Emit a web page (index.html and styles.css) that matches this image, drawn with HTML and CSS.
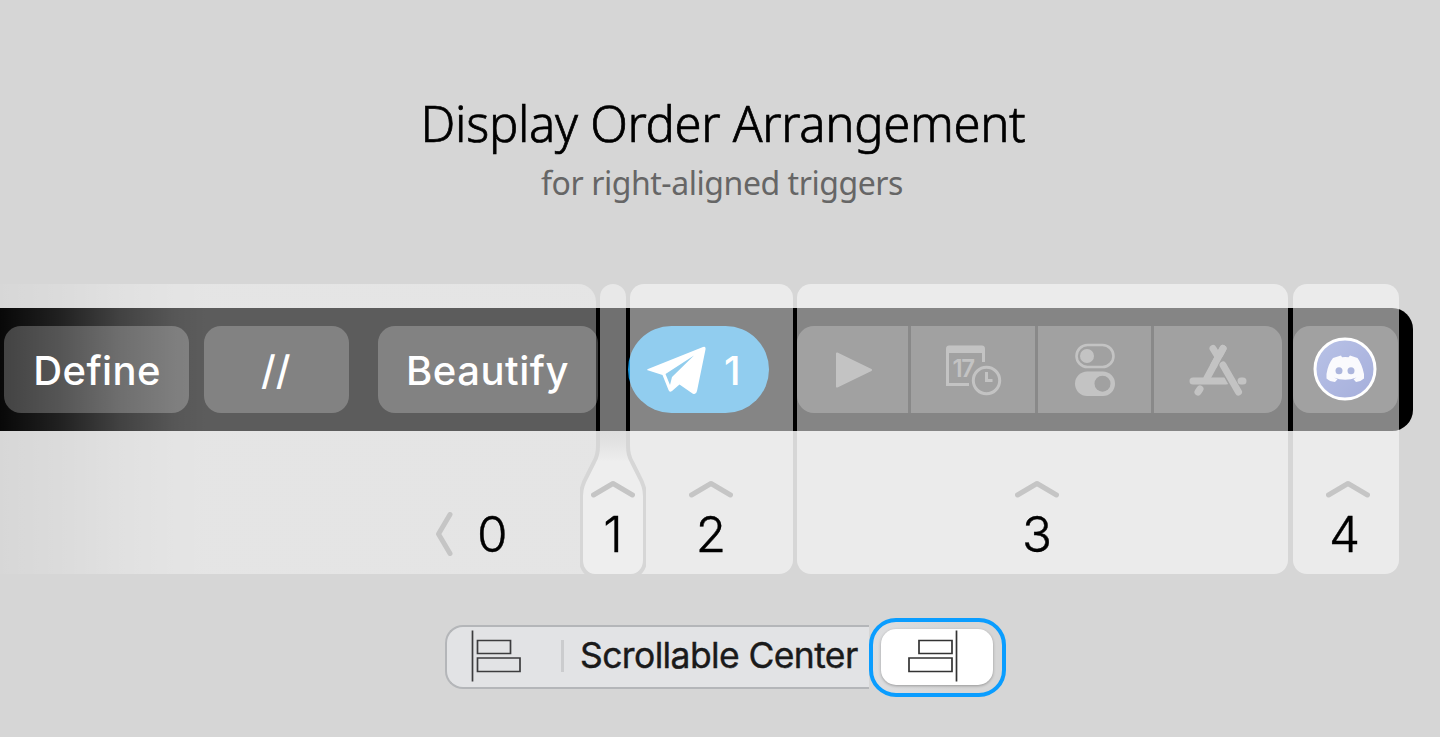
FILE: index.html
```html
<!DOCTYPE html>
<html lang="en">
<head>
<meta charset="utf-8">
<title>Display Order Arrangement</title>
<link rel="stylesheet" href="styles.css">
</head>
<body>
<header class="heading">
  <h1 class="title">Display Order Arrangement</h1>
  <p class="subtitle">for right-aligned triggers</p>
</header>

<main class="stage">
  <div class="touchbar">
    <div class="key key-define"></div>
    <div class="key key-slashes"></div>
    <div class="key key-beautify"></div>
    <div class="key-telegram"></div>
    <div class="group">
      <div class="cell cell-play">
        <svg width="38" height="38" viewBox="0 0 38 38"><path d="M2 2.5 36 19 2 35.5Z" fill="#838383" stroke="#838383" stroke-width="2" stroke-linejoin="round"/></svg>
      </div>
      <div class="cell cell-calendar">
        <svg width="58" height="52" viewBox="0 0 58 52" fill="none" stroke="#838383" stroke-width="3">
          <path d="M25 40.500H3.500V6M39.500 6V18"/>
          <path d="M2 9V5Q2 1.500 5 1.500H38Q41 1.500 41 5V9Z" fill="#838383" stroke="none"/>
          <circle cx="42.500" cy="36.500" r="13.200"/>
          <path d="M42.500 28V36.500H48.500"/>
          <text x="8.500" y="32.500" class="calendar-day">17</text>
        </svg>
      </div>
      <div class="cell cell-toggles">
        <svg width="42" height="54" viewBox="0 0 42 54">
          <rect x="2.500" y="2" width="37" height="22" rx="11" fill="none" stroke="#838383" stroke-width="2.600"/>
          <circle cx="13" cy="13" r="7" fill="#838383"/>
          <rect x="1" y="28.500" width="40" height="24.500" rx="12.250" fill="#838383"/>
          <circle cx="28.500" cy="40.700" r="8" fill="#3b3b3b"/>
        </svg>
      </div>
      <div class="cell cell-store">
        <svg width="58" height="52" viewBox="0 0 58 52" fill="none" stroke="#838383" stroke-width="7" stroke-linecap="round">
          <path d="M34 4.500 18 34" />
          <path d="M24 4.500 28 11"/>
          <path d="M4 37H37M52 37H54"/>
          <path d="M11 45 9 48"/>
          <path d="M30 15 46 43" stroke="#3b3b3b" stroke-width="9" stroke-linecap="butt"/>
          <path d="M34 4.500 25 21"/>
          <path d="M34 21 49.500 48"/>
        </svg>
      </div>
    </div>
    <div class="key key-discord">
      <svg width="64" height="64" viewBox="0 0 64 64">
        <defs><linearGradient id="blurple" x1="0" y1="0" x2="1" y2="1"><stop offset="0" stop-color="#6b80cc"/><stop offset="1" stop-color="#4557b4"/></linearGradient></defs>
        <circle cx="32" cy="32" r="30" fill="url(#blurple)" stroke="#fff" stroke-width="3"/>
        <path d="M20 21 28 18.500 29 20.300Q32 19.800 35.500 20.300L37 18.500 44.500 21Q49 27 51 37V41.500Q48 44.500 43 45L40.500 42.200 43.500 40.500Q32 45 21 40.500L24.500 42.200 22 45Q16.500 44.500 13.500 41.500V37Q15 27 20 21Z" fill="#f4f4fb"/>
        <circle cx="26" cy="33.800" r="3.500" fill="#5468b8"/><circle cx="38" cy="33.800" r="3.500" fill="#5468b8"/>
      </svg>
    </div>
  </div>

  <div class="panels">
    <section class="panel panel-0">
      <div class="labels">
        <span class="label label-define">Define</span>
        <span class="label label-slashes">//</span>
        <span class="label label-beautify">Beautify</span>
      </div>
      <div class="order order-row">
        <svg width="18" height="44" viewBox="0 0 18 44" class="chevron"><path d="M15 2.500 3.500 22 15 41.500"/></svg>
        <span class="number">0</span>
      </div>
    </section>
    <section class="panel panel-1">
      <svg class="bottle" width="66" height="290" viewBox="0 0 66 290">
        <defs>
          <linearGradient id="neck" gradientUnits="userSpaceOnUse" x1="0" y1="147" x2="0" y2="178"><stop offset="0" stop-color="#dedede"/><stop offset=".35" stop-color="#e2e2e2"/><stop offset="1" stop-color="#eee"/></linearGradient>
        </defs>
        <path d="M20 147V13A13 13 0 0 1 46 13V147Z" fill="#fff" fill-opacity=".44"/>
        <path d="M18 147V162C18 169 17 173 14 178L7 192C3 199 1 205 1 212V276C1 285 7 292 15 292H51C59 292 65 285 65 276V212C65 205 63 199 59 192L52 178C49 173 48 169 48 162V147" fill="url(#neck)" stroke="#d6d6d6" stroke-width="4"/>
      </svg>
      <div class="order">
        <svg width="44" height="18" viewBox="0 0 44 18" class="chevron"><path d="M2.500 15 22 3.500 41.500 15"/></svg>
        <span class="number">1</span>
      </div>
    </section>
    <section class="panel panel-2">
      <div class="labels">
        <svg class="plane" width="60" height="52" viewBox="0 0 60 52">
          <path d="M2 25 57 3Q60 2 59.500 5.500L51 47Q50 51.500 46.500 49.500L33.500 40.500 26 47Q23.500 49 22.500 46L16.500 31 2.500 26.500Q0 26 2 25Z" fill="#fff"/>
          <path d="M19.500 30 48 11.500 26 33 24 41Z" fill="#92cded"/>
        </svg>
        <span class="label label-count">1</span>
      </div>
      <div class="order">
        <svg width="44" height="18" viewBox="0 0 44 18" class="chevron"><path d="M2.500 15 22 3.500 41.500 15"/></svg>
        <span class="number">2</span>
      </div>
    </section>
    <section class="panel panel-3">
      <div class="order">
        <svg width="44" height="18" viewBox="0 0 44 18" class="chevron"><path d="M2.500 15 22 3.500 41.500 15"/></svg>
        <span class="number">3</span>
      </div>
    </section>
    <section class="panel panel-4">
      <div class="order">
        <svg width="44" height="18" viewBox="0 0 44 18" class="chevron"><path d="M2.500 15 22 3.500 41.500 15"/></svg>
        <span class="number">4</span>
      </div>
    </section>
  </div>
</main>

<nav class="picker">
  <div class="segments">
    <svg class="align-left" width="52" height="54" viewBox="0 0 52 54" fill="none" stroke="#3c3c3e" stroke-width="1.700"><path d="M2.500 1.500V52.500M7.500 11.500H40.500V24.500H7.500ZM7.500 29H50V42.500H7.500Z"/></svg>
    <span class="divider"></span>
    <span class="center-label">Scrollable Center</span>
  </div>
  <div class="focus-ring">
    <div class="selected">
      <svg width="52" height="54" viewBox="0 0 52 54" fill="none" stroke="#333" stroke-width="1.700"><path d="M49.500 1.500V52.500M12 11.500H45V24.500H12ZM2 29H45V42.500H2Z"/></svg>
    </div>
  </div>
</nav>
</body>
</html>
```
FILE: styles.css
```css
* { box-sizing: border-box; }
body {
  margin: 0;
  width: 1440px;
  height: 737px;
  overflow: hidden;
  background: #d6d6d6;
  color: #000;
  font-family: Inter, "Liberation Sans", sans-serif;
}
svg { display: block; flex: none; }

.heading {
  height: 284px;
  padding: 93px 0 0 6px;
  display: flex;
  flex-direction: column;
  align-items: center;
  font-family: "Noto Sans", sans-serif;
  white-space: nowrap;
}
.title { margin: 0; font-size: 49px; line-height: 60px; font-weight: 300; letter-spacing: -.3px; -webkit-text-stroke: .7px #000; }
.subtitle { margin: 9px 0 0; font-size: 32px; line-height: 42px; font-weight: 400; letter-spacing: -.45px; color: #666; padding-right: 2px; }

.stage { display: grid; height: 290px; }
.touchbar, .panels { grid-area: 1 / 1; display: flex; }
.touchbar {
  width: 1413px;
  height: 123px;
  margin-top: 24px;
  padding: 18px 15px 18px 3.500px;
  background: #000;
  border-radius: 0 21px 21px 0;
}
.key, .group { background: #3c3c3c; border-radius: 17px; height: 87px; flex: none; }
.key-define { width: 185px; }
.key-slashes { width: 145px; margin-left: 15px; }
.key-beautify { width: 220px; margin-left: 29px; }
.key-telegram { width: 141px; height: 87px; margin-left: 30px; border-radius: 44px; background: #1b97de; flex: none; }
.group { width: 485px; margin-left: 28.500px; display: flex; overflow: hidden; }
.cell { border-right: 3px solid #0a0a0a; display: flex; align-items: center; justify-content: center; flex: none; }
.cell-play { width: 114px; padding-left: 2px; }
.cell-calendar { width: 127px; padding-right: 1px; }
.cell-toggles { width: 116px; }
.cell-store { width: 128px; border-right: 0; }
.calendar-day { font: 600 24px Inter, sans-serif; letter-spacing: -1.500px; fill: #838383; stroke: none; }
.key-discord { width: 105px; margin-left: 11px; padding: 0 1px 1px 0; display: flex; align-items: center; justify-content: center; }

.panel { height: 290px; flex: none; display: flex; flex-direction: column; background: rgba(255, 255, 255, .52); border-radius: 14px; }
.panel-0 {
  width: 596px;
  border-radius: 0 18px 0 0;
  background: linear-gradient(90deg, rgba(255, 255, 255, .03) 0, rgba(255, 255, 255, .13) 60px, rgba(255, 255, 255, .26) 120px, rgba(255, 255, 255, .34) 175px, rgba(255, 255, 255, .36) 205px);
}
.panel-1 { width: 26px; margin-left: 4px; position: relative; background: none; align-items: center; }
.panel-2 { width: 163px; margin-left: 4px; border-bottom-left-radius: 0; }
.panel-3 { width: 491px; margin-left: 4px; }
.panel-4 { width: 106px; margin-left: 5px; }
.bottle { position: absolute; left: -20px; top: 0; }

.labels { height: 147px; padding-top: 24px; display: flex; align-items: center; flex: none; }
.label { color: #fff; font-size: 40px; line-height: 50px; font-weight: 500; white-space: nowrap; text-align: center; padding-top: 3px; }
.label-define { width: 185px; margin-left: 5px; letter-spacing: .4px; }
.label-slashes { width: 145px; margin-left: 14.500px; }
.label-beautify { width: 220px; margin-left: 29px; letter-spacing: .5px; padding-left: 2px; }
.plane { margin-left: 16px; }
.label-count { margin-left: 18px; }

.order { margin-top: auto; height: 94px; display: flex; flex-direction: column; align-items: center; position: relative; }
.chevron { fill: none; stroke: #c5c5c5; stroke-width: 5; stroke-linecap: round; stroke-linejoin: round; }
.number { font-size: 49.500px; line-height: 60px; font-weight: 350; margin-top: 6px; -webkit-text-stroke: .4px #000; }
.order-row { flex-direction: row; align-items: flex-start; padding: 32px 0 0 435px; }
.order-row .number { margin: -8px 0 0 24px; }
.panel-2 .order { padding-right: 1px; }
.panel-3 .order { padding-right: 11px; }
.panel-4 .number { padding-right: 3px; }
.panel-4 .chevron { margin-left: 4px; }

.picker { display: flex; padding: 44px 0 0 445px; }
.segments {
  width: 424px;
  height: 64px;
  margin-top: 7px;
  padding: 0 0 2px 23px;
  display: flex;
  align-items: center;
  border: 2px solid #b4b6b9;
  border-right: 0;
  border-radius: 18px 0 0 18px;
  background: #e2e3e5;
}
.divider { width: 3px; height: 32px; margin-left: 39px; background: #cbccce; flex: none; }
.center-label { margin-left: 16px; font-size: 35.500px; line-height: 44px; letter-spacing: -.62px; color: #1a1a1a; -webkit-text-stroke: .4px #1a1a1a; white-space: nowrap; }
.focus-ring {
  width: 137px;
  height: 79px;
  padding: 7px 8px;
  border: 4px solid #0a9dff;
  border-radius: 27px;
  background: linear-gradient(90deg, #dddee0, #d6d6d6 70%);
}
.selected {
  width: 112px;
  height: 56px;
  padding-left: 26px;
  background: #fff;
  border-radius: 15px;
  box-shadow: 0 1px 3px rgba(0, 0, 0, .3);
}
```
